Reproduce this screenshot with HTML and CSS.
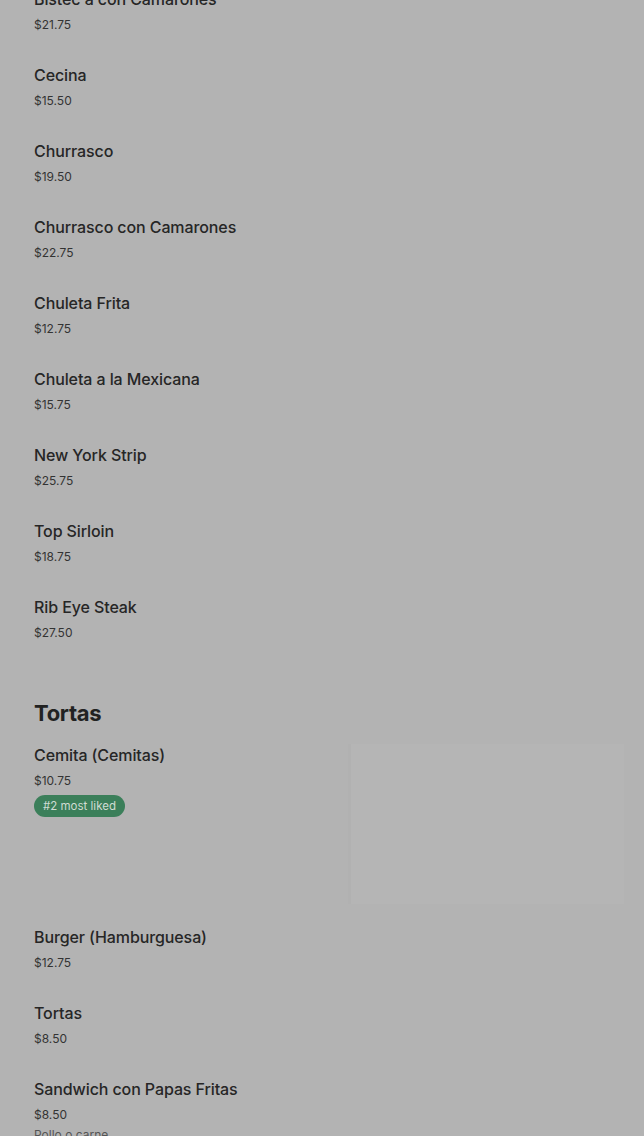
FILE: index.html
```html
<!DOCTYPE html>
<html>
<head>
<meta charset="utf-8">
<link rel="stylesheet" href="styles.css">
</head>
<body>
<div class="page">
  <section class="section first">
    <div class="item"><div class="info"><div class="name">Bistec a con Camarones</div><div class="price">$21.75</div></div></div>
    <div class="item"><div class="info"><div class="name">Cecina</div><div class="price">$15.50</div></div></div>
    <div class="item"><div class="info"><div class="name">Churrasco</div><div class="price">$19.50</div></div></div>
    <div class="item"><div class="info"><div class="name">Churrasco con Camarones</div><div class="price">$22.75</div></div></div>
    <div class="item"><div class="info"><div class="name">Chuleta Frita</div><div class="price">$12.75</div></div></div>
    <div class="item"><div class="info"><div class="name">Chuleta a la Mexicana</div><div class="price">$15.75</div></div></div>
    <div class="item"><div class="info"><div class="name">New York Strip</div><div class="price">$25.75</div></div></div>
    <div class="item"><div class="info"><div class="name">Top Sirloin</div><div class="price">$18.75</div></div></div>
    <div class="item"><div class="info"><div class="name">Rib Eye Steak</div><div class="price">$27.50</div></div></div>
  </section>
  <section class="section">
    <h2 class="heading">Tortas</h2>
    <div class="item with-image">
      <div class="info">
        <div class="name">Cemita (Cemitas)</div>
        <div class="price">$10.75</div>
        <span class="badge">#2 most liked</span>
      </div>
      <div class="photo"></div>
    </div>
    <div class="item"><div class="info"><div class="name">Burger (Hamburguesa)</div><div class="price">$12.75</div></div></div>
    <div class="item"><div class="info"><div class="name">Tortas</div><div class="price">$8.50</div></div></div>
    <div class="item"><div class="info"><div class="name">Sandwich con Papas Fritas</div><div class="price">$8.50</div><div class="desc">Pollo o carne</div></div></div>
  </section>
</div>
</body>
</html>
```

FILE: styles.css
```css
html, body {
  margin: 0;
  padding: 0;
  background: #b3b3b3;
  overflow: hidden;
}
body {
  font-family: Inter, "Noto Sans", "Liberation Sans", sans-serif;
  color: #262626;
}
.page {
  padding: 0 20px 0 34px;
  margin-top: -27px;
}
.section.first {
  margin-bottom: 42px;
}
.item {
  display: flex;
  justify-content: space-between;
  padding: 16px 0 14px;
  height: 46px;
}
.info {
  display: flex;
  flex-direction: column;
}
.name {
  font-size: 16px;
  line-height: 20px;
  font-weight: 500;
  color: #262626;
  letter-spacing: -0.1px;
}
.price {
  font-size: 12px;
  line-height: 20px;
  margin-top: 6px;
  color: #333;
}
.desc {
  font-size: 12px;
  line-height: 20px;
  color: #555;
  margin-top: 0;
}
.heading {
  margin: 0;
  font-size: 22px;
  line-height: 28px;
  font-weight: 700;
  color: #222;
  letter-spacing: -0.3px;
  margin-bottom: 2px;
}
.item.with-image {
  height: auto;
  padding: 15px 0 7px;
}
.item.with-image .info {
  padding-top: 1px;
}
.badge {
  align-self: flex-start;
  margin-top: 4px;
  background: #3b7f5a;
  color: #cfdcd3;
  font-size: 11.5px;
  line-height: 22px;
  height: 22px;
  padding: 0 9px;
  border-radius: 11px;
}
.photo {
  width: 276px;
  height: 160px;
  background: #b5b5b5;
  border-left: 3px solid #b1b1b1;
  box-sizing: border-box;
}
```
